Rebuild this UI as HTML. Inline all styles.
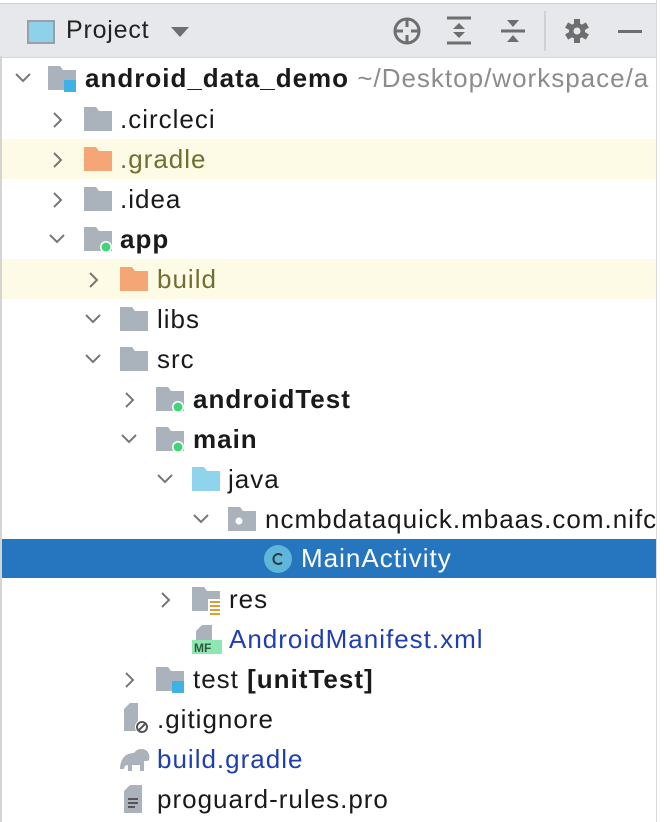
<!DOCTYPE html>
<html><head><meta charset="utf-8"><style>
body{margin:0;width:664px;height:822px;overflow:hidden;background:#fff;font-family:"Liberation Sans",Helvetica,Arial,sans-serif;position:relative}
.hdr{position:absolute;left:0;top:3px;width:656px;height:53px;background:#e6e8ec;border-top:1px solid #cfd1d4;border-bottom:1px solid #d6d7da}
.lb{position:absolute;left:0;top:56px;width:2px;height:766px;background:#d4d4d4}
.rb{position:absolute;left:656px;top:0;width:1px;height:822px;background:#d9d9d9}
.row{position:absolute;left:2px;width:654px;height:40px;overflow:hidden}
.t{position:absolute;top:0;height:40px;line-height:40px;font-size:26px;letter-spacing:1px;color:#1a1a1a;white-space:nowrap}
.ic{position:absolute;top:8px}
.ar{position:absolute;top:12px}
</style></head><body>
<div class="hdr">
 <svg style="position:absolute;left:27px;top:16px" width="28" height="24"><rect x="1" y="1" width="26" height="22" fill="#8fd0ea" stroke="#9aa0a6" stroke-width="2"/></svg>
 <div style="position:absolute;left:66px;top:0;line-height:53px;font-size:25px;letter-spacing:0.8px;color:#222">Project</div>
 <svg style="position:absolute;left:170px;top:22px" width="20" height="12"><path d="M1 1h18l-9 10z" fill="#6e6e6e"/></svg>
 <svg style="position:absolute;left:392px;top:12px" width="30" height="30"><circle cx="15" cy="15" r="12" fill="none" stroke="#6e6e6e" stroke-width="3"/><path d="M15 3v8M15 19v8M3 15h8M19 15h8" stroke="#6e6e6e" stroke-width="3"/></svg>
 <svg style="position:absolute;left:446px;top:12px" width="26" height="30"><path d="M1 2h24M1 27h24" stroke="#6e6e6e" stroke-width="3"/><path d="M13 7l6 6H7zM13 22l6-6H7z" fill="#6e6e6e"/></svg>
 <svg style="position:absolute;left:500px;top:12px" width="26" height="30"><path d="M1 15h24" stroke="#6e6e6e" stroke-width="3"/><path d="M7 4h12l-6 7zM7 26h12l-6-7z" fill="#6e6e6e"/></svg>
 <div style="position:absolute;left:544px;top:7px;width:2px;height:40px;background:#cfd1d4"></div>
 <svg style="position:absolute;left:564px;top:14px" width="26" height="26" viewBox="0 0 26 26"><g fill="#6e6e6e"><circle cx="13" cy="13" r="8"/><rect x="10" y="1" width="6" height="24"/><rect x="10" y="1" width="6" height="24" transform="rotate(60 13 13)"/><rect x="10" y="1" width="6" height="24" transform="rotate(120 13 13)"/></g><circle cx="13" cy="13" r="3.5" fill="#e6e8ec"/></svg>
 <div style="position:absolute;left:618px;top:26px;width:24px;height:3px;background:#6e6e6e"></div>
</div>
<div class="lb"></div><div class="rb"></div>

<div class="row" style="top:58px"><svg class="ar" style="left:12px" width="18" height="16"><path d="M2 4l7 7 7-7" fill="none" stroke="#777" stroke-width="2"/></svg>
<svg class="ic" style="left:46px" width="30" height="28"><path d="M0 0h12l3 4h13v20H0z" fill="#aab3bb"/><rect x="16" y="14" width="12" height="12" fill="#3fb1e3"/></svg>
<div class="t" style="left:83px"><b>android_data_demo</b><span style="color:#8c8c8c"> ~/Desktop/workspace/a</span></div></div>

<div class="row" style="top:99px"><svg class="ar" style="left:48px" width="16" height="18"><path d="M4 2l7 7-7 7" fill="none" stroke="#777" stroke-width="2"/></svg>
<svg class="ic" style="left:82px" width="30" height="26"><path d="M0 0h12l3 4h13v20H0z" fill="#aab3bb"/></svg><div class="t" style="left:118px">.circleci</div></div>

<div class="row" style="top:139px;background:#fdfbe6"><svg class="ar" style="left:48px" width="16" height="18"><path d="M4 2l7 7-7 7" fill="none" stroke="#777" stroke-width="2"/></svg>
<svg class="ic" style="left:82px" width="30" height="26"><path d="M0 0h12l3 4h13v20H0z" fill="#f5a676"/></svg><div class="t" style="left:118px;color:#6f6f30">.gradle</div></div>

<div class="row" style="top:179px"><svg class="ar" style="left:48px" width="16" height="18"><path d="M4 2l7 7-7 7" fill="none" stroke="#777" stroke-width="2"/></svg>
<svg class="ic" style="left:82px" width="30" height="26"><path d="M0 0h12l3 4h13v20H0z" fill="#aab3bb"/></svg><div class="t" style="left:118px">.idea</div></div>

<div class="row" style="top:219px"><svg class="ar" style="left:46px" width="18" height="16"><path d="M2 4l7 7 7-7" fill="none" stroke="#777" stroke-width="2"/></svg>
<svg class="ic" style="left:82px" width="30" height="28"><path d="M0 0h12l3 4h13v20H0z" fill="#aab3bb"/><circle cx="22" cy="20" r="6" fill="#fff"/><circle cx="22" cy="20" r="4.5" fill="#3ed676"/></svg><div class="t" style="left:118px"><b>app</b></div></div>

<div class="row" style="top:259px;background:#fdfbe6"><svg class="ar" style="left:84px" width="16" height="18"><path d="M4 2l7 7-7 7" fill="none" stroke="#777" stroke-width="2"/></svg>
<svg class="ic" style="left:118px" width="30" height="26"><path d="M0 0h12l3 4h13v20H0z" fill="#f5a676"/></svg><div class="t" style="left:155px;color:#6f6f30">build</div></div>

<div class="row" style="top:299px"><svg class="ar" style="left:82px" width="18" height="16"><path d="M2 4l7 7 7-7" fill="none" stroke="#777" stroke-width="2"/></svg>
<svg class="ic" style="left:118px" width="30" height="26"><path d="M0 0h12l3 4h13v20H0z" fill="#aab3bb"/></svg><div class="t" style="left:155px">libs</div></div>

<div class="row" style="top:339px"><svg class="ar" style="left:82px" width="18" height="16"><path d="M2 4l7 7 7-7" fill="none" stroke="#777" stroke-width="2"/></svg>
<svg class="ic" style="left:118px" width="30" height="26"><path d="M0 0h12l3 4h13v20H0z" fill="#aab3bb"/></svg><div class="t" style="left:155px">src</div></div>

<div class="row" style="top:379px"><svg class="ar" style="left:120px" width="16" height="18"><path d="M4 2l7 7-7 7" fill="none" stroke="#777" stroke-width="2"/></svg>
<svg class="ic" style="left:154px" width="30" height="28"><path d="M0 0h12l3 4h13v20H0z" fill="#aab3bb"/><circle cx="22" cy="20" r="6" fill="#fff"/><circle cx="22" cy="20" r="4.5" fill="#3ed676"/></svg><div class="t" style="left:191px"><b>androidTest</b></div></div>

<div class="row" style="top:419px"><svg class="ar" style="left:118px" width="18" height="16"><path d="M2 4l7 7 7-7" fill="none" stroke="#777" stroke-width="2"/></svg>
<svg class="ic" style="left:154px" width="30" height="28"><path d="M0 0h12l3 4h13v20H0z" fill="#aab3bb"/><circle cx="22" cy="20" r="6" fill="#fff"/><circle cx="22" cy="20" r="4.5" fill="#3ed676"/></svg><div class="t" style="left:191px"><b>main</b></div></div>

<div class="row" style="top:459px"><svg class="ar" style="left:154px" width="18" height="16"><path d="M2 4l7 7 7-7" fill="none" stroke="#777" stroke-width="2"/></svg>
<svg class="ic" style="left:190px" width="30" height="26"><path d="M0 0h12l3 4h13v20H0z" fill="#8fd3ed"/></svg><div class="t" style="left:226px">java</div></div>

<div class="row" style="top:499px"><svg class="ar" style="left:190px" width="18" height="16"><path d="M2 4l7 7 7-7" fill="none" stroke="#777" stroke-width="2"/></svg>
<svg class="ic" style="left:226px" width="30" height="26"><path d="M0 0h12l3 4h13v20H0z" fill="#aab3bb"/><circle cx="11" cy="14" r="3.5" fill="#fff"/></svg><div class="t" style="left:263px">ncmbdataquick.mbaas.com.nifc</div></div>

<div class="row" style="top:539px;height:39px;background:#2675bf"><svg class="ic" style="left:262px;top:6px" width="28" height="28"><circle cx="14" cy="14" r="14" fill="#5fb6d9"/><path d="M18 10.5a5 5 0 1 0 0 7" fill="none" stroke="#2b3b4a" stroke-width="2"/></svg><div class="t" style="left:299px;color:#fff;height:39px;line-height:39px">MainActivity</div></div>

<div class="row" style="top:579px"><svg class="ar" style="left:156px" width="16" height="18"><path d="M4 2l7 7-7 7" fill="none" stroke="#777" stroke-width="2"/></svg>
<svg class="ic" style="left:190px" width="34" height="30"><path d="M0 0h12l3 4h13v20H0z" fill="#aab3bb"/><rect x="16" y="12" width="14" height="16" fill="#fff"/><path d="M18 15h10M18 19h10M18 23h10M18 27h10" stroke="#d9a03a" stroke-width="2"/></svg><div class="t" style="left:227px">res</div></div>

<div class="row" style="top:619px"><svg class="ic" style="left:190px;top:6px" width="32" height="30"><path d="M4 0h16v16H4z" fill="#aab3bb"/><path d="M4 0l6 0-6 6z" fill="#fff"/><rect x="0" y="15" width="30" height="14" fill="#8ee6b0"/><text x="2" y="27" font-size="12" font-weight="bold" font-family="Liberation Sans" fill="#2e5a40">MF</text></svg><div class="t" style="left:227px;color:#1f3fb0">AndroidManifest.xml</div></div>

<div class="row" style="top:659px"><svg class="ar" style="left:120px" width="16" height="18"><path d="M4 2l7 7-7 7" fill="none" stroke="#777" stroke-width="2"/></svg>
<svg class="ic" style="left:154px" width="30" height="28"><path d="M0 0h12l3 4h13v20H0z" fill="#aab3bb"/><rect x="16" y="14" width="12" height="12" fill="#3fb1e3"/></svg><div class="t" style="left:191px">test <b>[unitTest]</b></div></div>

<div class="row" style="top:699px"><svg class="ic" style="left:122px;top:4px" width="28" height="32"><path d="M0 0h14v28H0z" fill="#aab3bb"/><path d="M0 0h6L0 6z" fill="#fff"/><circle cx="18" cy="24" r="7" fill="#fff"/><circle cx="18" cy="24" r="5" fill="none" stroke="#555" stroke-width="2"/><path d="M14.5 27.5l7-7" stroke="#555" stroke-width="2"/></svg><div class="t" style="left:155px">.gitignore</div></div>

<div class="row" style="top:739px"><svg class="ic" style="left:116px;top:8px" width="36" height="24"><path d="M2 22c0-8 4-16 14-16 3-5 10-5 13-2 3 3 3 8 1 10h-4v10h-4v-6h-8v6h-4v-6c-3 0-4 2-4 4z" fill="#aab3bb"/></svg><div class="t" style="left:155px;color:#1f3fb0">build.gradle</div></div>

<div class="row" style="top:779px"><svg class="ic" style="left:122px;top:6px" width="20" height="30"><path d="M0 0h18v28H0z" fill="#aab3bb"/><path d="M0 0h6L0 6z" fill="#fff"/><path d="M4 14h10M4 18h10M4 22h7" stroke="#555" stroke-width="2"/></svg><div class="t" style="left:155px">proguard-rules.pro</div></div>
</body></html>
